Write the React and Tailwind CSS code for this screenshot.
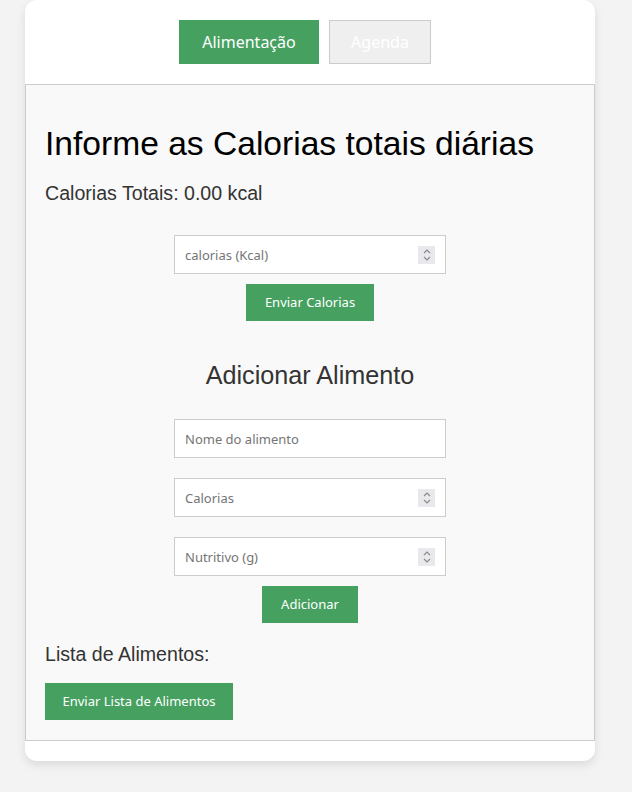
import React, { useState } from 'react';

const uiFont = { fontFamily: '"Noto Sans", "Open Sans", sans-serif' };

const Spinner = () => (
  <span className="absolute right-[11px] top-1/2 -translate-y-1/2 flex h-[18px] w-[17px] items-center justify-center bg-[#e9e9ed]">
    <svg width="10" height="14" viewBox="0 0 10 14" fill="none" stroke="#8a8a8a" strokeWidth="1.2">
      <path d="M2 5 L5 2 L8 5" />
      <path d="M2 9 L5 12 L8 9" />
    </svg>
  </span>
);

const Field = ({ placeholder, number }) => (
  <div className="relative w-[272px]">
    <input
      type="text"
      placeholder={placeholder}
      className="block h-[39px] w-full border border-[#ccc] bg-white px-[10px] text-[13px] text-[#333] placeholder:text-[#757575] outline-none"
      style={uiFont}
    />
    {number && <Spinner />}
  </div>
);

// larguras fixas pra bater com o layout original
const GreenButton = ({ children, className = '' }) => (
  <button
    className={`h-[37px] bg-[#46a161] text-[13px] text-white ${className}`}
    style={uiFont}
  >
    {children}
  </button>
);

export default function App() {
  const [tab, setTab] = useState('alimentacao');

  return (
    <div className="min-h-[792px] bg-[#f3f3f3] pb-8">
      <div className="ml-[25px] w-[570px] overflow-hidden rounded-xl bg-white shadow-[0_4px_10px_rgba(0,0,0,0.1)]">
        <div className="flex justify-center border-b border-[#ccc] py-5">
          <button
            onClick={() => setTab('alimentacao')}
            className="mr-[10px] h-[44px] w-[140px] bg-[#46a161] text-[16px] text-white"
            style={uiFont}
          >
            Alimentação
          </button>
          <button
            onClick={() => setTab('agenda')}
            className="mr-[10px] h-[44px] w-[102px] border border-[#ccc] bg-[#efefef] text-[16px] text-white"
            style={uiFont}
          >
            Agenda
          </button>
        </div>

        <div
          className="border-x border-b border-[#ccc] bg-[#f9f9f9] px-[19px] py-5"
          style={{ fontFamily: '"Liberation Sans", Arial, sans-serif' }}
        >
          <h1 className="mt-[20px] text-[33.6px] leading-[38px] text-black">
            Informe as Calorias totais diárias
          </h1>
          <h3 className="mt-[19px] text-[19.6px] leading-[23px] text-[#333]">
            Calorias Totais: 0.00 kcal
          </h3>

          <div className="mt-[30px] flex flex-col items-center gap-[10px]">
            <Field placeholder="calorias (Kcal)" number />
            <GreenButton className="w-[128px]">Enviar Calorias</GreenButton>
          </div>

          <h2 className="mt-[40px] text-center text-[25.2px] leading-[29px] text-[#333]">
            Adicionar Alimento
          </h2>

          <div className="mt-[29px] flex flex-col items-center gap-[20px]">
            <Field placeholder="Nome do alimento" />
            <Field placeholder="Calorias" number />
            <Field placeholder="Nutritivo (g)" number />
          </div>
          <div className="mt-[10px] flex justify-center">
            <GreenButton className="w-[96px]">Adicionar</GreenButton>
          </div>

          <h3 className="mt-[20px] text-[19.6px] leading-[23px] text-[#333]">
            Lista de Alimentos:
          </h3>
          <div className="mt-[17px]">
            <GreenButton className="w-[188px]">Enviar Lista de Alimentos</GreenButton>
          </div>
        </div>
        <div className="h-5" />
      </div>
    </div>
  );
}
